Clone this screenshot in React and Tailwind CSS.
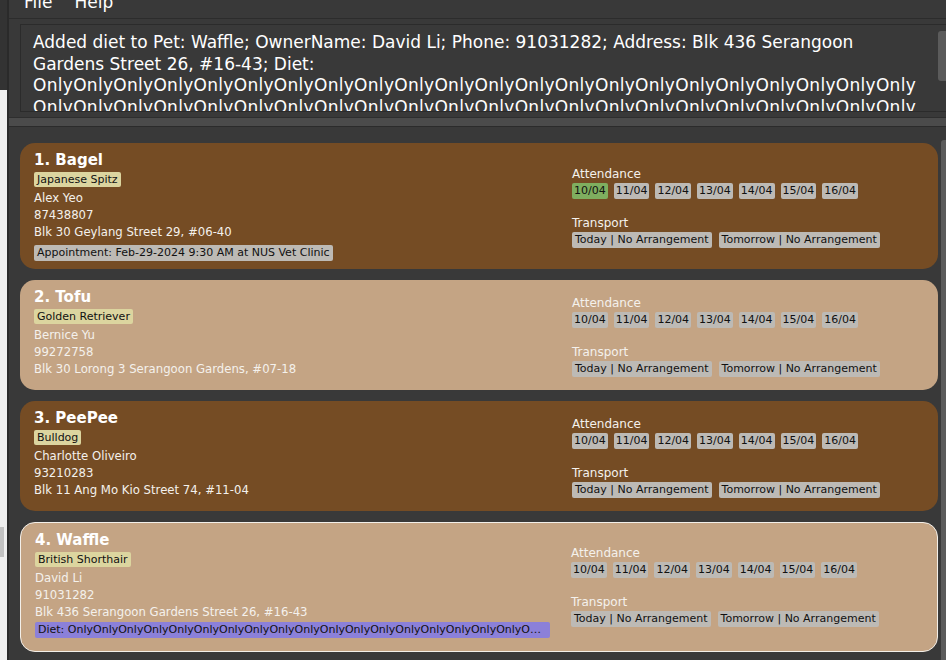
import React from "react";

const DATES = ["10/04", "11/04", "12/04", "13/04", "14/04", "15/04", "16/04"];
const ONLY_LINE = "Only".repeat(22);

const pets = [
  {
    name: "Bagel",
    breed: "Japanese Spitz",
    owner: "Alex Yeo",
    phone: "87438807",
    address: "Blk 30 Geylang Street 29, #06-40",
    dark: true,
    present: ["10/04"],
    appointment: "Appointment: Feb-29-2024 9:30 AM at NUS Vet Clinic",
  },
  {
    name: "Tofu",
    breed: "Golden Retriever",
    owner: "Bernice Yu",
    phone: "99272758",
    address: "Blk 30 Lorong 3 Serangoon Gardens, #07-18",
    dark: false,
    present: [],
  },
  {
    name: "PeePee",
    breed: "Bulldog",
    owner: "Charlotte Oliveiro",
    phone: "93210283",
    address: "Blk 11 Ang Mo Kio Street 74, #11-04",
    dark: true,
    present: [],
  },
  {
    name: "Waffle",
    breed: "British Shorthair",
    owner: "David Li",
    phone: "91031282",
    address: "Blk 436 Serangoon Gardens Street 26, #16-43",
    dark: false,
    present: [],
    selected: true,
    diet: "Diet: " + "Only".repeat(50),
  },
];

const Chip = ({ children, green, wide }) => (
  <span
    className={`h-[16px] leading-[16px] rounded-[2px] text-[11px] text-[#111] whitespace-nowrap ${
      wide ? "px-[3px]" : "px-[2px]"
    } ${green ? "bg-[#7fae5f]" : "bg-[#bdbab5]"}`}
  >
    {children}
  </span>
);

const PetCard = ({ pet, index }) => {
  const bg = pet.dark ? "bg-[#754c24]" : "bg-[#c4a484]";
  const frame = pet.selected
    ? "border border-[#f3efe9] pt-[6px] pb-[13px] pl-[14px]"
    : "pt-[6px] pb-[8px] pl-[14px]";

  return (
    <div className={`flex rounded-[15px] ${bg} ${frame}`}>
      <div className={`${pet.selected ? "w-[536px]" : "w-[538px]"} flex flex-col`}>
        <div className="h-[22px] leading-[22px] text-[15px] font-bold text-white">
          {index}. {pet.name}
        </div>
        <div className="mt-[1px] flex">
          <span className="h-[15px] leading-[15px] px-[3px] rounded-[2px] bg-[#dcd59f] text-[11px] text-[#111]">
            {pet.breed}
          </span>
        </div>
        <div className="mt-[3px] text-[11.7px] leading-[17px] text-[#f4f1ec]">
          <div>{pet.owner}</div>
          <div>{pet.phone}</div>
          <div>{pet.address}</div>
        </div>
        <div className={pet.diet ? "pt-[1px]" : "pt-[4px]"}>
          {pet.appointment && (
            <div className="flex">
              <span className="h-[16px] leading-[16px] px-[3px] rounded-[2px] bg-[#bdbab5] text-[11px] text-[#111]">
                {pet.appointment}
              </span>
            </div>
          )}
          {pet.diet && (
            <div className="w-[515px] h-[16px] leading-[16px] px-[3px] rounded-[2px] bg-[#8b80d9] text-[11px] text-[#111] truncate">
              {pet.diet}
            </div>
          )}
        </div>
      </div>

      <div className="flex flex-col justify-center pt-[4px]">
        <div className="text-[12px] leading-[17px] text-[#f4f1ec]">Attendance</div>
        <div className="flex gap-[6px]">
          {DATES.map((d) => (
            <Chip key={d} green={pet.present.includes(d)}>
              {d}
            </Chip>
          ))}
        </div>
        <div className="mt-[16px] text-[12px] leading-[17px] text-[#f4f1ec]">Transport</div>
        <div className="flex gap-[7px]">
          <Chip wide>Today | No Arrangement</Chip>
          <Chip wide>Tomorrow | No Arrangement</Chip>
        </div>
      </div>
    </div>
  );
};

export default function App() {
  return (
    <div
      className="w-[946px] h-[660px] overflow-hidden flex bg-[#393939]"
      style={{ fontFamily: '"DejaVu Sans", sans-serif' }}
    >
      {/* desktop behind the window */}
      <div className="w-[7px] shrink-0 flex flex-col">
        <div className="h-[90px] bg-[#333333]" />
        <div className="flex-1 bg-[#efefef] flex flex-col">
          <div className="h-[437px]" />
          <div className="h-[30px] w-[4px] bg-[#c2c2c2]" />
        </div>
      </div>
      <div className="w-[2px] shrink-0 bg-[#2a2a2a]" />

      <div className="flex-1 min-w-0 flex flex-col">
        {/* menu bar */}
        <div className="h-[19px] overflow-hidden flex gap-[22px] pl-[15px] border-b border-[#2c2c2c] text-[17px] text-white">
          <span className="-mt-[8px] leading-[20px]">File</span>
          <span className="-mt-[8px] leading-[20px]">Help</span>
        </div>

        {/* result display */}
        <div className="pl-[11px] pt-[5px]">
          <div className="h-[88px] flex border border-[#2b2b2b] border-r-0 bg-[#393939]">
            <div className="flex-1 min-w-0 overflow-hidden pl-[12px] pt-[7px] text-[17px] leading-[21.5px] text-white whitespace-nowrap">
              <div>
                Added diet to Pet: Waffle; OwnerName: David Li; Phone: 91031282; Address: Blk 436 Serangoon
              </div>
              <div>Gardens Street 26, #16-43; Diet:</div>
              <div className="tracking-[0.3px]">{ONLY_LINE}</div>
              <div className="tracking-[0.3px]">{ONLY_LINE}</div>
            </div>
            <div className="w-[8px] shrink-0 pt-[6px]">
              <div className="h-[50px] rounded-l-[3px] bg-[#5b5b5b]" />
            </div>
          </div>
        </div>

        {/* split pane divider */}
        <div className="h-[5px]" />
        <div className="h-[1px] bg-[#2e2e2e]" />
        <div className="h-[8px] bg-[#4b4b4b]" />
        <div className="h-[1px] bg-[#2b2b2b]" />

        {/* pet list */}
        <div className="flex-1 min-h-0 flex pl-[11px] pt-[16px]">
          <div className="w-[918px] shrink-0 flex flex-col gap-[11px]">
            {pets.map((p, i) => (
              <PetCard key={p.name} pet={p} index={i + 1} />
            ))}
          </div>
          <div className="ml-[3px] mt-[-3px] w-[5px] shrink-0 rounded-tl-[3px] bg-[#5b5b5b]" />
        </div>
      </div>
    </div>
  );
}
